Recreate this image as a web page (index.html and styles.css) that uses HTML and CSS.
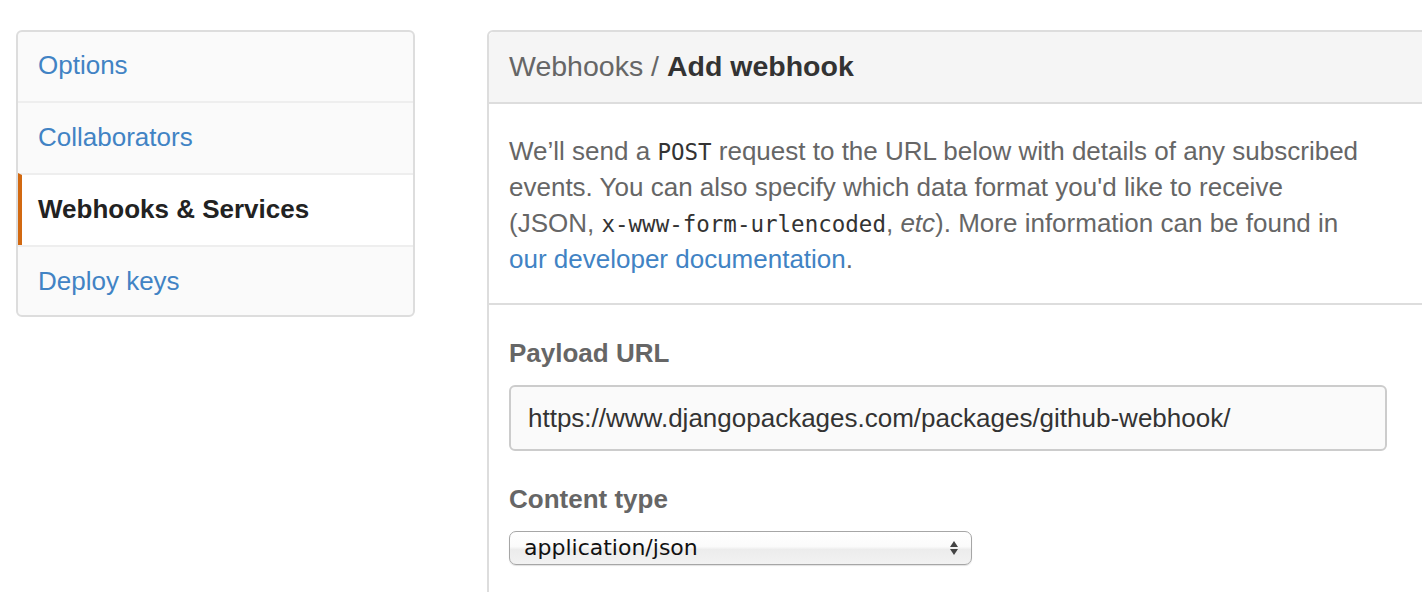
FILE: index.html
```
<!DOCTYPE html>
<html>
<head>
<meta charset="utf-8">
<link rel="stylesheet" href="styles.css">
</head>
<body>
<div class="page">
  <nav class="menu">
    <a class="menu-item" href="#">Options</a>
    <a class="menu-item" href="#">Collaborators</a>
    <a class="menu-item selected" href="#">Webhooks &amp; Services</a>
    <a class="menu-item" href="#">Deploy keys</a>
  </nav>
  <section class="panel">
    <h2 class="panel-head"><span class="crumb">Webhooks /</span> <strong>Add webhook</strong></h2>
    <div class="panel-intro">
      <p>We’ll send a <code>POST</code> request to the URL below with details of any subscribed<br>events. You can also specify which data format you'd like to receive<br>(JSON, <code>x-www-form-urlencoded</code>, <em>etc</em>). More information can be found in<br><a href="#">our developer documentation</a>.</p>
    </div>
    <div class="panel-form">
      <label class="field-label">Payload URL</label>
      <div class="text-input">https://www.djangopackages.com/packages/github-webhook/</div>
      <label class="field-label">Content type</label>
      <div class="select">
        <span class="select-text">application/json</span>
        <svg class="select-arrows" width="12" height="18" viewBox="0 0 12 18"><path d="M6 2 L10 8 H2 Z" fill="#444"/><path d="M6 16 L10 10 H2 Z" fill="#444"/></svg>
      </div>
    </div>
  </section>
</div>
</body>
</html>
```
FILE: styles.css
```
html, body {
  margin: 0;
  padding: 0;
  overflow: hidden;
  background: #fff;
}
body {
  font-family: "Liberation Sans", Arial, Helvetica, sans-serif;
}
.page {
  display: flex;
  align-items: flex-start;
  gap: 72px;
  padding: 31px 0 0 16px;
  width: 2000px;
}
.menu {
  width: 395px;
  margin-top: -1px;
  border: 2px solid #dddddd;
  border-radius: 6px;
  background: #fafafa;
  display: flex;
  flex-direction: column;
  overflow: hidden;
}
.menu-item {
  display: block;
  padding: 19px 20px 21px;
  font-size: 26px;
  line-height: 30px;
  color: #4183c4;
  text-decoration: none;
  border-top: 2px solid #eeeeee;
}
.menu-item:first-child {
  border-top: 0;
  padding-top: 18px;
}
.menu-item:last-child {
  padding-bottom: 19px;
}
.menu-item.selected {
  background: #fff;
  color: #222;
  font-weight: bold;
  padding-left: 16px;
  border-left: 4px solid #d26911;
}
.panel {
  width: 1000px;
  flex: none;
  margin-top: -1px;
  border: 2px solid #dddddd;
  border-radius: 6px 0 0 0;
}
.panel-head {
  margin: 0;
  padding: 16px 20px 18px;
  background: #f5f5f5;
  border-bottom: 2px solid #dddddd;
  font-size: 28.5px;
  line-height: 36px;
  font-weight: normal;
  color: #333;
  border-radius: 5px 0 0 0;
}
.crumb {
  color: #666;
}
.panel-head strong {
  font-weight: bold;
  color: #333;
}
.panel-intro {
  padding: 29px 20px 26px;
  border-bottom: 2px solid #dddddd;
}
.panel-intro p {
  margin: 0;
  font-size: 26px;
  line-height: 36px;
  color: #666;
}
.panel-intro code {
  font-family: "DejaVu Sans Mono", "Liberation Mono", monospace;
  font-size: 22.5px;
  line-height: 1;
  color: #333;
}
.panel-intro em {
  font-style: italic;
}
.panel-intro a {
  color: #4183c4;
  text-decoration: none;
}
.panel-form {
  padding: 33px 20px 40px;
  display: flex;
  flex-direction: column;
  align-items: flex-start;
}
.field-label {
  display: block;
  font-size: 26px;
  line-height: 30px;
  font-weight: bold;
  color: #666;
  margin-bottom: 17px;
}
.text-input {
  box-sizing: border-box;
  width: 878px;
  height: 66px;
  border: 2px solid #cccccc;
  border-radius: 6px;
  background: #fafafa;
  padding: 0 17px;
  font-size: 26px;
  line-height: 62px;
  color: #333;
  margin-bottom: 33px;
}
.select {
  box-sizing: border-box;
  width: 463px;
  height: 34px;
  border: 1px solid #a6a6a6;
  border-radius: 7px;
  background: linear-gradient(#ffffff 0%, #fbfbfb 45%, #ececec 55%, #f2f2f2 100%);
  box-shadow: 0 1px 1px rgba(0,0,0,0.12);
  display: flex;
  align-items: center;
  justify-content: space-between;
  padding: 0 11px 0 14px;
}
.select-text {
  font-family: "DejaVu Sans", "Liberation Sans", sans-serif;
  font-size: 22px;
  color: #111;
  line-height: 30px;
}
.select-arrows {
  display: block;
}
```
